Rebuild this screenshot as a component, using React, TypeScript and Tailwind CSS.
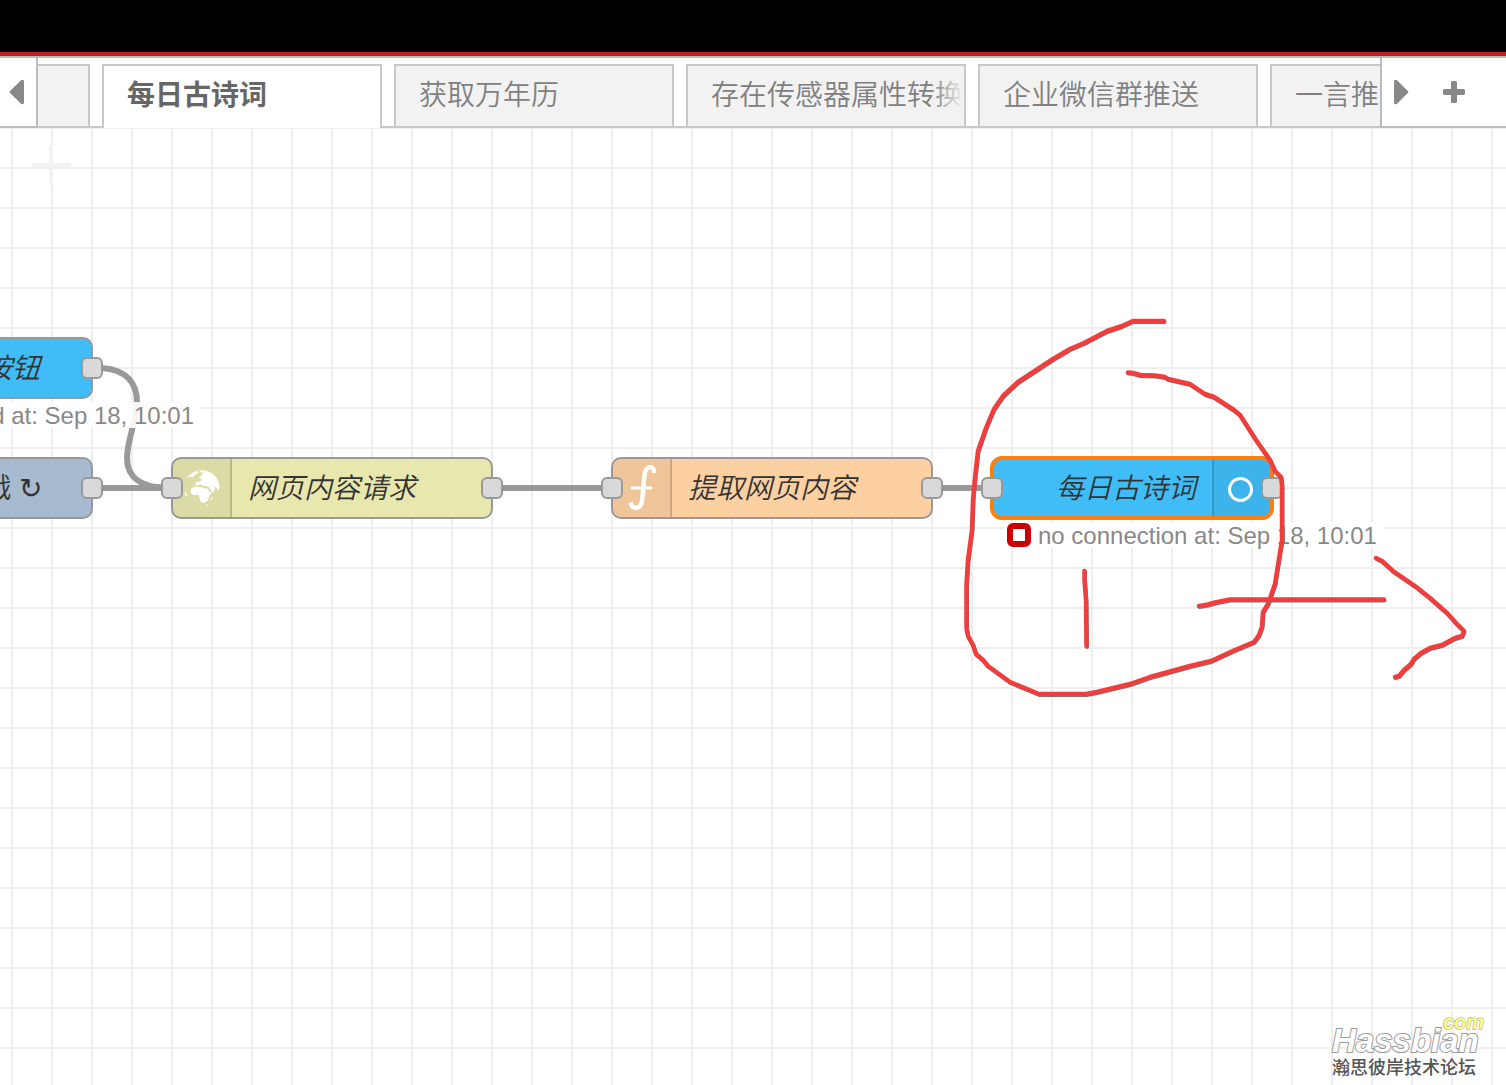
import type { ReactNode } from "react";

const tabs = [
  { name: "" },
  { name: "每日古诗词", active: true },
  { name: "获取万年历" },
  { name: "存在传感器属性转换" },
  { name: "企业微信群推送" },
  { name: "一言推送" },
];

const portBase =
  "absolute top-1/2 size-[22px] -translate-y-1/2 rounded-md border-2 border-[#999] bg-[#d9d9d9]";

function Ports({ input }: { input?: boolean }) {
  return (
    <>
      {input && <span className={`${portBase} -left-[10px]`} />}
      <span className={`${portBase} -right-[10px]`} />
    </>
  );
}

function NodeBody({ className, children }: { className: string; children: ReactNode }) {
  return (
    <div
      className={`flex h-full items-stretch overflow-hidden rounded-[10px] border-2 border-[#999] text-[28px] leading-none text-[#333] ${className}`}
    >
      {children}
    </div>
  );
}

function NodeLabel({ className = "", children }: { className?: string; children: ReactNode }) {
  return <span className={`self-center whitespace-nowrap pt-0.5 font-[350] ${className}`}>{children}</span>;
}

function IconCell({ children }: { children: ReactNode }) {
  return (
    <span className="flex w-[59px] shrink-0 items-center justify-center border-r-2 border-black/15 bg-black/5">
      {children}
    </span>
  );
}

function GlobeIcon() {
  return (
    <svg viewBox="0 0 36 38" className="h-[38px] w-9" fill="#fff" aria-hidden="true">
      <path d="M3 9C5.500 5.500 9 3 13 2L14.500 3.500L12.500 5L10.500 6L9 8.500L6.500 7.500Z" />
      <path d="M15 1.500C25 0 35.500 7 35.500 19L34.500 22L32 18L30.500 17.500L31 21L28.500 24L26 20L24 17.500L19 17L16.500 15.500L11 17L12 13L16.500 12.500L17.500 10L14.500 9L17 7L18 5L21 4L17 3.500Z" />
      <path d="M7 20L10 18L18 18L20 19.500L24 19.500L25 22.500L27.500 23.500L25 27.500L24 31.500L20.500 34L17 33.500L15.500 28.500L14.500 26L9 26L6.500 23.500Z" />
      <path d="M0.500 22.500L2.500 24L3 28L1.500 27Z" />
      <path d="M27 29L28.500 27L28 30.500L27 31.500ZM21.500 36.500L25 35L23 37Z" />
    </svg>
  );
}

function FunctionIcon() {
  return (
    <svg viewBox="0 0 30 48" className="ml-0.5 h-12 w-[30px]" fill="none" stroke="#fff" aria-hidden="true">
      <path
        d="M26.500 9C26 4.500 25 3.200 22 3.200C18 3.200 16.800 7 16.300 13L14.300 35C13.700 41 12 43.800 8 43.800C4 43.800 3.500 41.500 2.500 38.500"
        strokeWidth="4.500"
      />
      <path d="M3 24H24" strokeWidth="3" />
    </svg>
  );
}

function Status({ className, children }: { className: string; children: ReactNode }) {
  return (
    <div
      className={`absolute flex h-[26px] items-center gap-[7px] whitespace-nowrap bg-white/90 text-2xl leading-none text-[#888] ${className}`}
    >
      {children}
    </div>
  );
}

function Wires() {
  return (
    <svg className="absolute left-0 top-0 size-full" fill="none" stroke="#999" strokeWidth="6" aria-hidden="true">
      <path d="M102 360H162M502 360H602M942 360H982" />
      <path d="M102 240C128 242 137 257 137 274C137 292 127 312 127 330C127 350 142 359 164 359.500" />
    </svg>
  );
}

const strokes = [
  "1164,321 1133,321 1122,326 1107,331 1084,343 1070,349 1053,359 1018,382 1003,396 994,409 986,428 978,451 975,478 973,500 972,530 968,560 966.500,585 966.500,628 968,636 973,645 976,654 983,660 988,666 1010,682 1039,694 1086,694 1097,692 1130,684 1150,677 1190,666 1211,661 1235,650 1254,642 1259,635 1262,627 1263,612 1268,604 1275,584 1282,540 1282,485 1281,477 1275,471 1270,460 1256,440 1240,415 1234,410 1214,397 1205,394 1190,384 1168,379 1165,377 1155,375.500 1140,375 1133,373 1128,372.500",
  "1084.500,571 1084.500,580 1086,600 1086.500,646",
  "1199,606 1208,604.500 1215,602.500 1230,599.500 1384,599.500",
  "1376,558 1382,561 1393,571 1415,586 1430,598 1447,613 1456,623 1464,631 1462,636 1455,638 1442,645 1430,648 1421,653 1414,659 1411,664 1404,670 1399,676 1395,677",
];

function Annotations() {
  return (
    <svg className="pointer-events-none absolute left-0 top-0 size-full" fill="none" strokeLinecap="round" strokeLinejoin="round" aria-hidden="true">
      <g transform="translate(0 -128)">
        {strokes.map((points) => (
          <g key={points}>
            <polyline points={points} stroke="#777" strokeWidth="4" transform="translate(0.500 1)" />
            <polyline points={points} stroke="#f23d3d" strokeWidth="4.500" />
          </g>
        ))}
      </g>
    </svg>
  );
}

export default function App() {
  return (
    <div className="flex min-h-screen flex-col overflow-hidden bg-white font-['Liberation_Sans','Noto_Sans_CJK_SC',sans-serif]">
      <header className="h-14 shrink-0 border-b-4 border-[#c02020] bg-black" />

      <nav className="flex h-[72px] shrink-0 border-t-2 border-[#bbb] bg-white">
        <button aria-label="Scroll left" className="flex w-[38px] shrink-0 items-center border-b-2 border-r-2 border-[#bbb] pl-[9px]">
          <svg viewBox="0 0 15 26" className="h-[26px] w-[15px]" fill="#888" aria-hidden="true">
            <path d="M1.300 11.800L12 1.200Q15 -0.500 15 3V23Q15 26.500 12 24.800L1.300 14.200Q0 13 1.300 11.800Z" />
          </svg>
        </button>

        <div role="tablist" className="flex min-w-0 flex-1 items-end gap-3 overflow-hidden shadow-[inset_0_-2px_0_#c8c8c8]">
          {tabs.map((tab) => (
            <button
              key={tab.name}
              role="tab"
              aria-selected={!!tab.active}
              aria-label={tab.name || "Flow"}
              className={`relative h-16 w-[280px] shrink-0 overflow-hidden whitespace-nowrap border-2 border-[#c8c8c8] pl-[23px] text-left text-[28px] first:-ml-[228px] ${
                tab.active
                  ? "border-b-0 bg-white pb-0.5 font-bold text-[#666]"
                  : "bg-[#f2f2f2] font-[350] text-[#808080]"
              }`}
            >
              {tab.name}
              {!tab.active && (
                <span className="absolute inset-y-0 right-0 w-8 bg-linear-to-r from-[#f2f2f2]/0 to-[#f2f2f2]" />
              )}
            </button>
          ))}
        </div>

        <div className="flex w-[126px] shrink-0 items-center border-b-2 border-l-2 border-[#bbb]">
          <button aria-label="Scroll right" className="flex h-full w-[38px] items-center pl-3">
            <svg viewBox="0 0 15 26" className="h-[26px] w-[15px]" fill="#888" aria-hidden="true">
              <path d="M13.700 11.800L3 1.200Q0 -0.500 0 3V23Q0 26.500 3 24.800L13.700 14.200Q15 13 13.700 11.800Z" />
            </svg>
          </button>
          <button aria-label="Add flow" className="flex h-full w-[68px] items-center justify-center">
            <svg viewBox="0 0 22 22" className="size-[22px]" fill="#888" aria-hidden="true">
              <rect x="8" width="6" height="22" rx="1.500" />
              <rect y="8" width="22" height="6" rx="1.500" />
            </svg>
          </button>
        </div>
      </nav>

      <main className="relative flex-1 overflow-hidden bg-[linear-gradient(#eee_2px,transparent_2px),linear-gradient(90deg,#eee_2px,transparent_2px)] bg-size-[40px_40px] bg-position-[11px_-1px]">
        <svg viewBox="0 0 39 39" className="absolute left-8 top-[18px] size-[39px]" fill="#f1f3f3" aria-hidden="true">
          <path d="M17 0H21V17H39V21H21V39H17V21H0V17H17Z" />
        </svg>

        <Wires />

        <div className="absolute -left-[227px] top-[209px] h-[62px] w-80">
          <NodeBody className="justify-end bg-[#40bdf7] pr-[51px] italic">
            <NodeLabel>按钮</NodeLabel>
          </NodeBody>
          <Ports />
          <Status className="-right-[109px] top-[65px] pr-2 pt-0.5">pressed at: Sep 18, 10:01</Status>
        </div>

        <div className="absolute -left-[227px] top-[329px] h-[62px] w-80">
          <NodeBody className="justify-end bg-[#a6bbcf] pr-[49px]">
            <NodeLabel>时间戳 ↻</NodeLabel>
          </NodeBody>
          <Ports />
        </div>

        <div className="absolute left-[171px] top-[329px] h-[62px] w-[322px]">
          <NodeBody className="bg-[#e7e7ae] italic">
            <IconCell>
              <GlobeIcon />
            </IconCell>
            <NodeLabel className="pl-4">网页内容请求</NodeLabel>
          </NodeBody>
          <Ports input />
        </div>

        <div className="absolute left-[611px] top-[329px] h-[62px] w-[322px]">
          <NodeBody className="bg-[#fdd0a2] italic">
            <IconCell>
              <FunctionIcon />
            </IconCell>
            <NodeLabel className="pl-4">提取网页内容</NodeLabel>
          </NodeBody>
          <Ports input />
        </div>

        <div className="absolute left-[990px] top-[328px] h-16 w-[284px]">
          <div className="flex h-full justify-end overflow-hidden rounded-xl border-4 border-[#ff7f0e] bg-[#40bdf7] text-[28px] italic leading-none text-[#333]">
            <NodeLabel className="pr-4">每日古诗词</NodeLabel>
            <span className="flex w-[58px] items-center border-l-2 border-black/15 bg-black/5 pl-3.5">
              <span className="mt-0.5 size-[25px] rounded-full border-[3px] border-white" />
            </span>
          </div>
          <span className={`${portBase} -left-[9px]`} />
          <span className={`${portBase} -right-[9px]`} />
          <Status className="left-[14px] top-[66px] pl-[3px] pr-[9px]">
            <span className="size-6 rounded-md border-[6px] border-[#c00] bg-white" />
            <span className="pt-0.5">no connection at: Sep 18, 10:01</span>
          </Status>
        </div>

        <div className="absolute bottom-[7px] right-[22px] flex w-[152px] flex-col font-bold italic leading-none">
          <span className="absolute -top-3 right-0 text-xl leading-none text-[#ffff80] [-webkit-text-stroke:1px_#999] [paint-order:stroke_fill]">
            com
          </span>
          <span className="text-[33px] leading-[34px] text-white [-webkit-text-stroke:2px_#999] [paint-order:stroke_fill]">
            Hassbian
          </span>
          <span className="whitespace-nowrap text-lg font-medium not-italic leading-5 text-[#555]">瀚思彼岸技术论坛</span>
        </div>

        <Annotations />
      </main>
    </div>
  );
}
